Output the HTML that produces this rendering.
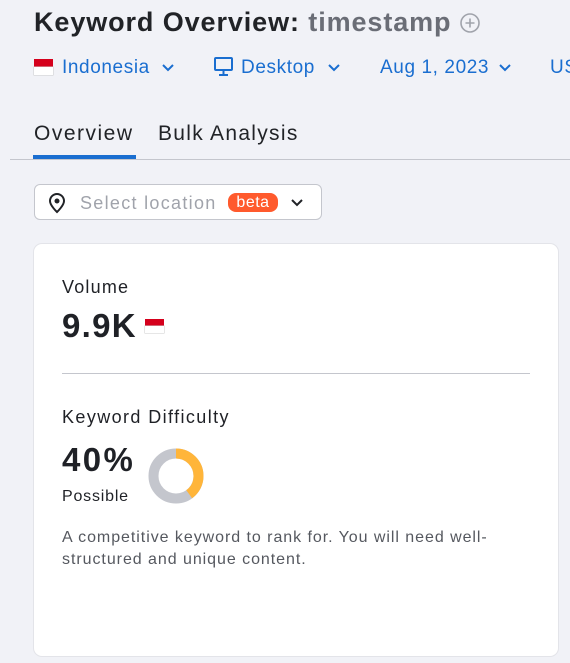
<!DOCTYPE html><html><head><style>
body{margin:0;width:570px;height:663px;background:#f1f2f7;font-family:"Liberation Sans",sans-serif;position:relative;overflow:hidden;color:#1f2126}
.a{position:absolute;white-space:nowrap}
.blue{color:#1a6ed0;font-size:19px;letter-spacing:0.6px}
</style></head><body>
<div class="a" style="left:34px;top:7px;font-size:27px;letter-spacing:0.9px;font-weight:bold;color:#212327">Keyword Overview: <span style="color:#6a6d76">timestamp</span></div>
<svg class="a" style="left:459px;top:12px" width="22" height="22" viewBox="0 0 22 22"><circle cx="11" cy="11" r="9" fill="none" stroke="#a0a3ab" stroke-width="1.6"/><path d="M11 6.5v9M6.5 11h9" stroke="#a0a3ab" stroke-width="1.6"/></svg>
<div class="a" style="left:34px;top:59px;width:19px;height:8px;background:#d5001c"></div>
<div class="a" style="left:34px;top:67px;width:19px;height:8px;background:#fff;box-shadow:0 0 0 .5px #ccc"></div>
<div class="a blue" style="left:62px;top:57px">Indonesia</div>
<svg class="a" style="left:161px;top:63px" width="14" height="10"><path d="M2 2l5 5 5-5" fill="none" stroke="#1a6ed0" stroke-width="2"/></svg>
<svg class="a" style="left:213px;top:56px" width="22" height="22" viewBox="0 0 22 22"><rect x="2" y="2" width="17" height="12" rx="1" fill="none" stroke="#1a6ed0" stroke-width="2"/><path d="M10.5 14v4M6 19h9" stroke="#1a6ed0" stroke-width="2"/></svg>
<div class="a blue" style="left:241px;top:57px">Desktop</div>
<svg class="a" style="left:327px;top:63px" width="14" height="10"><path d="M2 2l5 5 5-5" fill="none" stroke="#1a6ed0" stroke-width="2"/></svg>
<div class="a blue" style="left:380px;top:57px">Aug 1, 2023</div>
<svg class="a" style="left:498px;top:63px" width="14" height="10"><path d="M2 2l5 5 5-5" fill="none" stroke="#1a6ed0" stroke-width="2"/></svg>
<div class="a blue" style="left:550px;top:57px">US</div>
<div class="a" style="left:34px;top:122px;font-size:21px;letter-spacing:1.5px;color:#212327">Overview</div>
<div class="a" style="left:158px;top:122px;font-size:21px;letter-spacing:1.3px;color:#212327">Bulk Analysis</div>
<div class="a" style="left:10px;top:159px;width:560px;height:1px;background:#c4c6cd"></div>
<div class="a" style="left:33px;top:155px;width:103px;height:4px;background:#1a6ed0"></div>
<div class="a" style="left:34px;top:184px;width:288px;height:36px;background:#fff;border:1px solid #c4c6cd;border-radius:6px;box-sizing:border-box"></div>
<svg class="a" style="left:47px;top:192px" width="20" height="22" viewBox="0 0 20 22"><path d="M10 20s-7-6.5-7-11a7 7 0 0 1 14 0c0 4.5-7 11-7 11z" fill="none" stroke="#212327" stroke-width="2"/><circle cx="10" cy="9" r="2.5" fill="#212327"/></svg>
<div class="a" style="left:80px;top:193px;font-size:18px;letter-spacing:1.3px;color:#a0a3ab">Select location</div>
<div class="a" style="left:228px;top:193px;width:50px;height:19px;background:#ff5a2d;border-radius:8px;color:#fff;font-size:16px;letter-spacing:0.5px;text-align:center;line-height:19px">beta</div>
<svg class="a" style="left:290px;top:198px" width="14" height="10"><path d="M2 2l5 5 5-5" fill="none" stroke="#212327" stroke-width="2"/></svg>
<div class="a" style="left:34px;top:244px;width:524px;height:412px;background:#fff;border-radius:8px;box-shadow:0 0 0 1px #e3e4e9"></div>
<div class="a" style="left:62px;top:277px;font-size:18px;letter-spacing:1.2px">Volume</div>
<div class="a" style="left:62px;top:307px;font-size:33px;letter-spacing:1.3px;font-weight:bold">9.9K</div>
<div class="a" style="left:145px;top:319px;width:19px;height:7px;background:#d5001c"></div>
<div class="a" style="left:145px;top:326px;width:19px;height:7px;background:#fff;box-shadow:0 0 0 .5px #ccc"></div>
<div class="a" style="left:62px;top:373px;width:468px;height:1px;background:#c4c6cd"></div>
<div class="a" style="left:62px;top:407px;font-size:18px;letter-spacing:1.4px">Keyword Difficulty</div>
<div class="a" style="left:62px;top:441px;font-size:33px;letter-spacing:2.4px;font-weight:bold">40%</div>
<div class="a" style="left:62px;top:488px;font-size:16px;letter-spacing:0.8px">Possible</div>
<svg class="a" style="left:146px;top:446px" width="60" height="60" viewBox="0 0 60 60"><circle cx="30" cy="30" r="22.5" fill="none" stroke="#c4c6cd" stroke-width="10"/><circle cx="30" cy="30" r="22.5" fill="none" stroke="#ffb53a" stroke-width="10" stroke-dasharray="56.5 200" transform="rotate(-90 30 30)"/></svg>
<div class="a" style="left:62px;top:527px;font-size:16px;letter-spacing:0.95px;line-height:22px;color:#55585f;white-space:normal;width:430px">A competitive keyword to rank for. You will need well-structured and unique content.</div>
</body></html>
